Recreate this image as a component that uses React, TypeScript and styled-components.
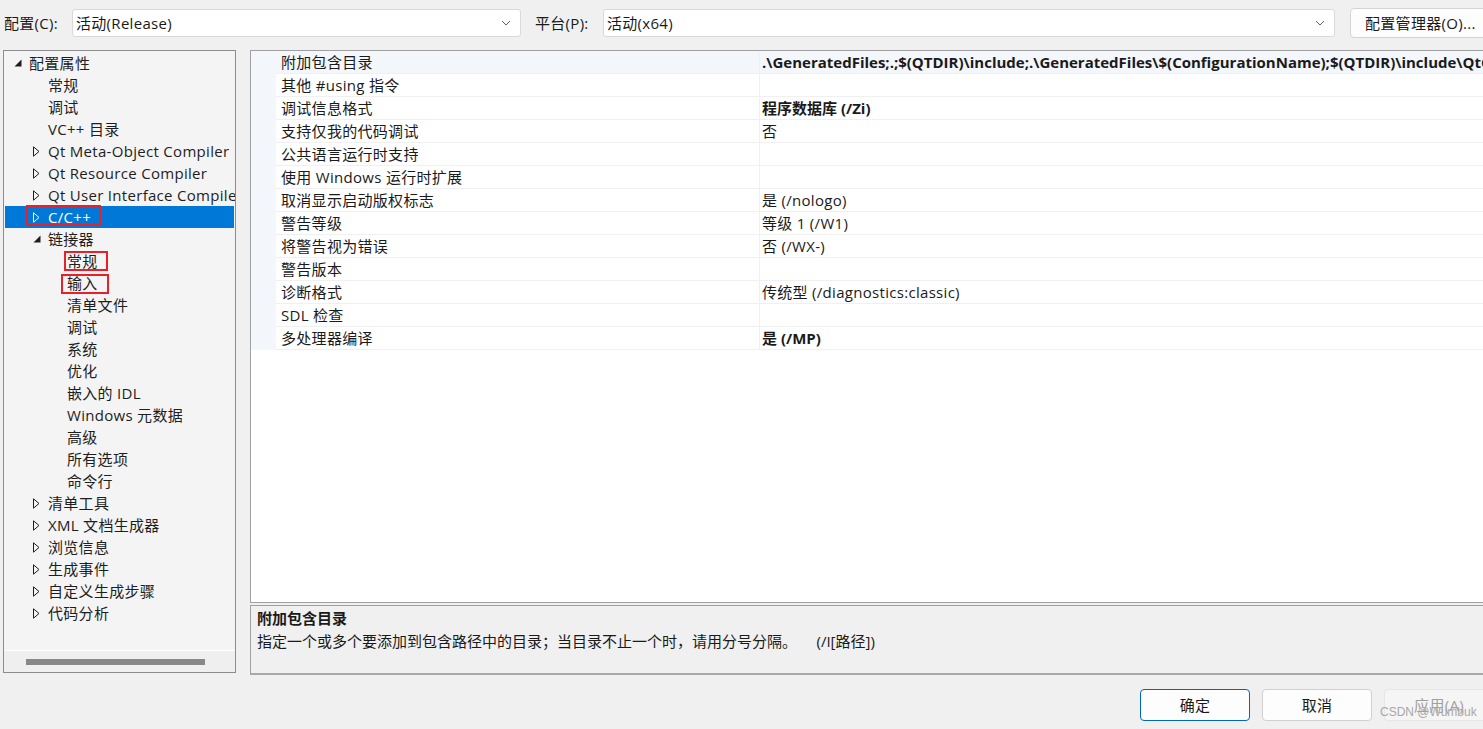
import React, { ReactElement } from "react";
import styled, { createGlobalStyle } from "styled-components";

const GlobalStyle = createGlobalStyle`
  html, body {
    margin: 0;
    padding: 0;
    background: #f0f0f0;
    overflow: hidden;
  }
  body {
    font-family: "Open Sans", "Noto Sans CJK SC", sans-serif;
    font-size: 15px;
    letter-spacing: 0.3px;
    color: #1a1a1a;
  }
`;

interface Mark {
  x: number;
  w: number;
  y: number;
  h: number;
}

interface TreeItem {
  label: string;
  level: number;
  arrow?: "open" | "closed";
  selected?: boolean;
  mark?: Mark;
}

const tree: TreeItem[] = [
  { label: "配置属性", level: 0, arrow: "open" },
  { label: "常规", level: 1 },
  { label: "调试", level: 1 },
  { label: "VC++ 目录", level: 1 },
  { label: "Qt Meta-Object Compiler", level: 1, arrow: "closed" },
  { label: "Qt Resource Compiler", level: 1, arrow: "closed" },
  { label: "Qt User Interface Compiler", level: 1, arrow: "closed" },
  { label: "C/C++", level: 1, arrow: "closed", selected: true, mark: { x: 21, w: 75, y: -1, h: 21 } },
  { label: "链接器", level: 1, arrow: "open" },
  { label: "常规", level: 2, mark: { x: 59, w: 44, y: 1, h: 20 } },
  { label: "输入", level: 2, mark: { x: 56, w: 48, y: 2, h: 20 } },
  { label: "清单文件", level: 2 },
  { label: "调试", level: 2 },
  { label: "系统", level: 2 },
  { label: "优化", level: 2 },
  { label: "嵌入的 IDL", level: 2 },
  { label: "Windows 元数据", level: 2 },
  { label: "高级", level: 2 },
  { label: "所有选项", level: 2 },
  { label: "命令行", level: 2 },
  { label: "清单工具", level: 1, arrow: "closed" },
  { label: "XML 文档生成器", level: 1, arrow: "closed" },
  { label: "浏览信息", level: 1, arrow: "closed" },
  { label: "生成事件", level: 1, arrow: "closed" },
  { label: "自定义生成步骤", level: 1, arrow: "closed" },
  { label: "代码分析", level: 1, arrow: "closed" },
];

interface Prop {
  name: string;
  value?: string;
  bold?: boolean;
}

const props: Prop[] = [
  {
    name: "附加包含目录",
    value:
      ".\\GeneratedFiles;.;$(QTDIR)\\include;.\\GeneratedFiles\\$(ConfigurationName);$(QTDIR)\\include\\QtCore;$(QTDIR)\\include\\QtGui",
    bold: true,
  },
  { name: "其他 #using 指令" },
  { name: "调试信息格式", value: "程序数据库 (/Zi)", bold: true },
  { name: "支持仅我的代码调试", value: "否" },
  { name: "公共语言运行时支持" },
  { name: "使用 Windows 运行时扩展" },
  { name: "取消显示启动版权标志", value: "是 (/nologo)" },
  { name: "警告等级", value: "等级 1 (/W1)" },
  { name: "将警告视为错误", value: "否 (/WX-)" },
  { name: "警告版本" },
  { name: "诊断格式", value: "传统型 (/diagnostics:classic)" },
  { name: "SDL 检查" },
  { name: "多处理器编译", value: "是 (/MP)", bold: true },
];

function Chevron(): ReactElement {
  return (
    <svg width="10" height="6" viewBox="0 0 10 6">
      <path d="M1 1 L5 5 L9 1" fill="none" stroke="#606060" strokeWidth="1" />
    </svg>
  );
}

function Arrow({ kind, light }: { kind: "open" | "closed"; light?: boolean }): ReactElement {
  const c = light ? "#ffffff" : "#1e1e1e";
  if (kind === "open") {
    return (
      <svg width="8" height="8" viewBox="0 0 8 8">
        <path d="M7.5 0.5 L7.5 7.5 L0.5 7.5 Z" fill={c} />
      </svg>
    );
  }
  return (
    <svg width="7" height="11" viewBox="0 0 7 11">
      <path d="M0.5 0.8 L6 5.5 L0.5 10.2 Z" fill="none" stroke={c} strokeWidth="1" />
    </svg>
  );
}

function App(): ReactElement {
  return (
    <Styled.Dialog>
      <GlobalStyle />
      <Styled.TopBar>
        <Styled.Label>配置(C):</Styled.Label>
        <Styled.Combo $width={449}>
          <span>活动(Release)</span>
          <Chevron />
        </Styled.Combo>
        <Styled.Label $left={14}>平台(P):</Styled.Label>
        <Styled.Combo $width={732}>
          <span>活动(x64)</span>
          <Chevron />
        </Styled.Combo>
        <Styled.TopButton>配置管理器(O)...</Styled.TopButton>
      </Styled.TopBar>

      <Styled.Main>
        <Styled.TreePanel>
          <Styled.TreeList>
            {tree.map((t, i) => (
              <Styled.TreeRow key={i} $selected={t.selected} $level={t.level}>
                <Styled.ArrowBox>{t.arrow && <Arrow kind={t.arrow} light={t.selected} />}</Styled.ArrowBox>
                <Styled.TreeText>{t.label}</Styled.TreeText>
                {t.mark && <Styled.MarkBox $m={t.mark} />}
              </Styled.TreeRow>
            ))}
          </Styled.TreeList>
          <Styled.HScroll>
            <Styled.Thumb />
          </Styled.HScroll>
        </Styled.TreePanel>

        <Styled.RightCol>
          <Styled.Grid>
            {props.map((p, i) => (
              <Styled.GridRow key={i} $active={i === 0}>
                <Styled.Gutter />
                <Styled.NameCell>{p.name}</Styled.NameCell>
                <Styled.ValueCell $bold={p.bold}>{p.value}</Styled.ValueCell>
              </Styled.GridRow>
            ))}
          </Styled.Grid>
          <Styled.Desc>
            <Styled.DescTitle>附加包含目录</Styled.DescTitle>
            <Styled.DescText>指定一个或多个要添加到包含路径中的目录；当目录不止一个时，请用分号分隔。     (/I[路径])</Styled.DescText>
          </Styled.Desc>
        </Styled.RightCol>
      </Styled.Main>

      <Styled.Footer>
        <Styled.Button $variant="primary">确定</Styled.Button>
        <Styled.Button>取消</Styled.Button>
        <Styled.Button $variant="disabled">应用(A)</Styled.Button>
        <Styled.Watermark>CSDN @Wumbuk</Styled.Watermark>
      </Styled.Footer>
    </Styled.Dialog>
  );
}

const Styled = {
  Dialog: styled.div`
    width: 1483px;
    height: 729px;
    overflow: hidden;
    display: flex;
    flex-direction: column;
    position: relative;
  `,
  TopBar: styled.div`
    height: 50px;
    flex: none;
    display: flex;
    align-items: flex-start;
    padding: 9px 0 0 4px;
    box-sizing: border-box;
  `,
  Label: styled.span<{ $left?: number }>`
    flex: none;
    margin-left: ${(p) => p.$left || 0}px;
    line-height: 28px;
    width: 68px;
    white-space: nowrap;
  `,
  Combo: styled.div<{ $width: number }>`
    flex: none;
    width: ${(p) => p.$width}px;
    height: 28px;
    box-sizing: border-box;
    background: #ffffff;
    border: 1px solid #d9d9d9;
    border-radius: 3px;
    display: flex;
    align-items: center;
    justify-content: space-between;
    padding: 0 9px 0 3px;
    span {
      line-height: 26px;
    }
  `,
  TopButton: styled.div`
    flex: none;
    margin: -1px 0 0 15px;
    width: 150px;
    height: 30px;
    box-sizing: border-box;
    background: #fdfdfd;
    border: 1px solid #d4d4d4;
    border-radius: 4px;
    padding-left: 14px;
    line-height: 28px;
    white-space: nowrap;
  `,
  Main: styled.div`
    display: flex;
    padding-left: 3px;
    gap: 14px;
    height: 625px;
    flex: none;
  `,
  TreePanel: styled.div`
    width: 233px;
    height: 623px;
    flex: none;
    box-sizing: border-box;
    border: 1px solid #8c8c8c;
    background: #f4f4f4;
    display: flex;
    flex-direction: column;
  `,
  TreeList: styled.div`
    flex: 1;
    padding: 1px 0 0 1px;
    overflow: hidden;
  `,
  TreeRow: styled.div<{ $selected?: boolean; $level: number }>`
    position: relative;
    height: 22px;
    width: 229px;
    display: flex;
    align-items: center;
    padding-left: ${(p) => 5 + p.$level * 19}px;
    box-sizing: border-box;
    background: ${(p) => (p.$selected ? "#0078d7" : "transparent")};
    color: ${(p) => (p.$selected ? "#ffffff" : "#1e1e1e")};
    white-space: nowrap;
  `,
  ArrowBox: styled.span`
    width: 19px;
    padding-left: 4px;
    box-sizing: border-box;
    display: flex;
    align-items: center;
    flex: none;
  `,
  TreeText: styled.span`
    line-height: 20px;
  `,
  MarkBox: styled.span<{ $m: Mark }>`
    position: absolute;
    left: ${(p) => p.$m.x}px;
    top: ${(p) => p.$m.y}px;
    width: ${(p) => p.$m.w}px;
    height: ${(p) => p.$m.h}px;
    box-sizing: border-box;
    border: 2px solid #e8202a;
  `,
  HScroll: styled.div`
    height: 21px;
    flex: none;
    border-top: 1px solid #ffffff;
    background: #efefef;
    display: flex;
    align-items: center;
    padding-left: 22px;
  `,
  Thumb: styled.div`
    width: 179px;
    height: 6px;
    background: #888888;
  `,
  RightCol: styled.div`
    flex: 1;
    display: flex;
    flex-direction: column;
    gap: 2px;
  `,
  Grid: styled.div`
    height: 553px;
    box-sizing: border-box;
    border: 1px solid #a0a0a0;
    border-right: none;
    background: #ffffff;
    display: flex;
    flex-direction: column;
  `,
  GridRow: styled.div<{ $active?: boolean }>`
    height: 23px;
    flex: none;
    display: flex;
    box-sizing: border-box;
    border-bottom: 1px solid #f0f0f0;
    background: ${(p) => (p.$active ? "#f3f6fb" : "#ffffff")};
  `,
  Gutter: styled.div`
    width: 25px;
    flex: none;
    background: #f3f6fb;
    margin-bottom: -1px;
  `,
  NameCell: styled.div`
    width: 478px;
    flex: none;
    padding-left: 5px;
    line-height: 22px;
    border-right: 1px solid #f0f0f0;
    white-space: nowrap;
  `,
  ValueCell: styled.div<{ $bold?: boolean }>`
    flex: 1;
    padding-left: 2px;
    line-height: 22px;
    font-weight: ${(p) => (p.$bold ? 700 : 400)};
    letter-spacing: ${(p) => (p.$bold ? "0" : "0.3px")};
    white-space: nowrap;
    overflow: hidden;
  `,
  Desc: styled.div`
    height: 70px;
    box-sizing: border-box;
    border: 1px solid #a0a0a0;
    border-right: none;
    border-bottom: 2px solid #a8a8a8;
    background: #f0f0f0;
    padding: 1px 0 0 6px;
  `,
  DescTitle: styled.div`
    font-weight: 700;
    letter-spacing: 0;
    line-height: 22px;
  `,
  DescText: styled.div`
    line-height: 24px;
    letter-spacing: 0;
    white-space: pre;
  `,
  Footer: styled.div`
    flex: 1;
    display: flex;
    align-items: flex-start;
    padding: 14px 0 0 1140px;
    gap: 12px;
    position: relative;
  `,
  Button: styled.div<{ $variant?: "primary" | "disabled" }>`
    width: 110px;
    height: 32px;
    flex: none;
    box-sizing: border-box;
    border-radius: 4px;
    text-align: center;
    line-height: 30px;
    background: ${(p) => (p.$variant === "disabled" ? "#f5f5f5" : "#fdfdfd")};
    color: ${(p) => (p.$variant === "disabled" ? "#a0a0a0" : "#1a1a1a")};
    border: 1px solid
      ${(p) => (p.$variant === "primary" ? "#0067c0" : p.$variant === "disabled" ? "#e6e6e6" : "#d0d0d0")};
  `,
  Watermark: styled.span`
    position: absolute;
    left: 1380px;
    top: 30px;
    font-family: "Liberation Sans", sans-serif;
    font-size: 12px;
    letter-spacing: 0;
    color: #a8a8a8;
  `,
};

export default App;
